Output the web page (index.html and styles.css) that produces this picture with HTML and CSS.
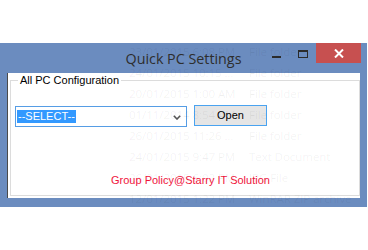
FILE: index.html
```html
<!DOCTYPE html>
<html>
<head>
<meta charset="utf-8">
<title>Quick PC Settings</title>
<link rel="stylesheet" href="styles.css">
</head>
<body>
<div class="window">
  <div class="titlebar">
    <div class="spacer"></div>
    <div class="title">Quick PC Settings</div>
    <div class="controls">
      <div class="ctl ctl-min"><span class="min-bar"></span></div>
      <div class="ctl ctl-max"><span class="max-box"></span></div>
      <div class="ctl ctl-close">
        <svg width="10" height="9" viewBox="0 0 10 9"><path d="M1 0.5 L9 8.5 M9 0.5 L1 8.5" stroke="#fff" stroke-width="2" fill="none"/></svg>
      </div>
    </div>
  </div>
  <div class="client">
    <fieldset class="group">
      <legend class="group-label">All PC Configuration</legend>
      <div class="row">
        <div class="combo">
          <span class="combo-value">--SELECT--</span>
          <svg class="combo-arrow" width="8" height="5" viewBox="0 0 8 5"><path d="M0.8 0.8 L4 4 L7.2 0.8" stroke="#555" stroke-width="1.6" fill="none"/></svg>
        </div>
        <div class="btn">Open</div>
      </div>
      <div class="credit">Group Policy@Starry IT Solution</div>
    </fieldset>
  </div>
  <div class="ghost">
    <span>23/01/2015 6:08 PM</span><span>File folder</span>
    <span>24/01/2015 10:15 ...</span><span>File folder</span>
    <span>20/01/2015 1:00 AM</span><span>File folder</span>
    <span>01/11/2014 8:54 AM</span><span>File folder</span>
    <span>26/01/2015 11:26 ...</span><span>File folder</span>
    <span>24/01/2015 9:47 PM</span><span>Text Document</span>
    <span>26/01/2015 6:02 PM</span><span>JPG File</span>
    <span>12/01/2015 1:22 PM</span><span>WinRAR ZIP archive</span>
  </div>
</div>
</body>
</html>
```
FILE: styles.css
```css
html, body {
  margin: 0;
  padding: 0;
  background: #ffffff;
  width: 368px;
  height: 250px;
  overflow: hidden;
}

.window {
  position: relative;
  margin-top: 43px;
  width: 367px;
  height: 164px;
  background: #6b8cbf;
  display: flex;
  flex-direction: column;
  overflow: hidden;
  font-family: "Liberation Sans", Arial, sans-serif;
}

.titlebar {
  height: 30px;
  display: grid;
  grid-template-columns: 1fr auto 1fr;
  align-items: start;
}

.title {
  font-family: "Open Sans", "Noto Sans", sans-serif;
  font-size: 14.3px;
  color: #2e2e2e;
  line-height: 20px;
  padding-top: 6px;
  white-space: nowrap;
}

.controls {
  display: flex;
  justify-content: flex-end;
  padding-right: 6px;
}

.ctl {
  height: 20px;
  display: flex;
  align-items: center;
  justify-content: center;
}

.ctl-min {
  width: 26px;
  align-items: flex-start;
}

.min-bar {
  display: block;
  width: 9px;
  height: 2px;
  margin-top: 13px;
  background: #2b2b2b;
}

.ctl-max {
  width: 27px;
  align-items: flex-start;
}

.max-box {
  display: block;
  width: 8px;
  height: 5px;
  margin-top: 7px;
  border: 1px solid #2b2b2b;
  border-top-width: 2px;
}

.ctl-close {
  width: 45px;
  background: #c75050;
}

.client {
  flex: 1;
  margin: 0 7px 9px 7px;
  background: #ffffff;
  border-left: 1px solid #4a4a4a;
  display: flex;
}

.group {
  flex: 1;
  margin: 1px 0 2px 2px;
  padding: 0 0 0 4px;
  border: 1px solid #dcdcdc;
  min-width: 0;
}

.group-label {
  font-size: 11px;
  line-height: 13px;
  color: #000;
  padding: 0 2px;
  margin-left: 3px;
}

.row {
  display: flex;
  align-items: flex-start;
  gap: 7px;
  margin-top: 19px;
}

.combo {
  box-sizing: border-box;
  width: 172px;
  height: 21px;
  border: 1px solid #569de5;
  display: flex;
  align-items: center;
  justify-content: space-between;
  padding: 0 5px 0 1px;
}

.combo-value {
  font-size: 11px;
  line-height: 13px;
  color: #ffffff;
  background: #3399ff;
  padding: 0 1px;
}

.combo-arrow {
  margin-top: 1px;
}

.btn {
  box-sizing: border-box;
  width: 73px;
  height: 21px;
  margin-top: -1px;
  border: 1px solid #4aa3f0;
  background: #e5e5e5;
  font-size: 11px;
  line-height: 19px;
  text-align: center;
  color: #000;
}

.credit {
  margin-top: 47px;
  padding-left: 96px;
  font-size: 11px;
  line-height: 13px;
  color: #f0143c;
}

.ghost {
  position: absolute;
  left: 0;
  top: -2px;
  right: 0;
  bottom: 0;
  padding-left: 129px;
  display: grid;
  grid-template-columns: 120px auto;
  grid-auto-rows: 21px;
  align-items: center;
  font-family: "Open Sans", "Noto Sans", sans-serif;
  font-size: 11.6px;
  letter-spacing: -0.1px;
  color: rgba(0, 0, 0, 0.06);
  pointer-events: none;
  white-space: nowrap;
  overflow: hidden;
}
```
